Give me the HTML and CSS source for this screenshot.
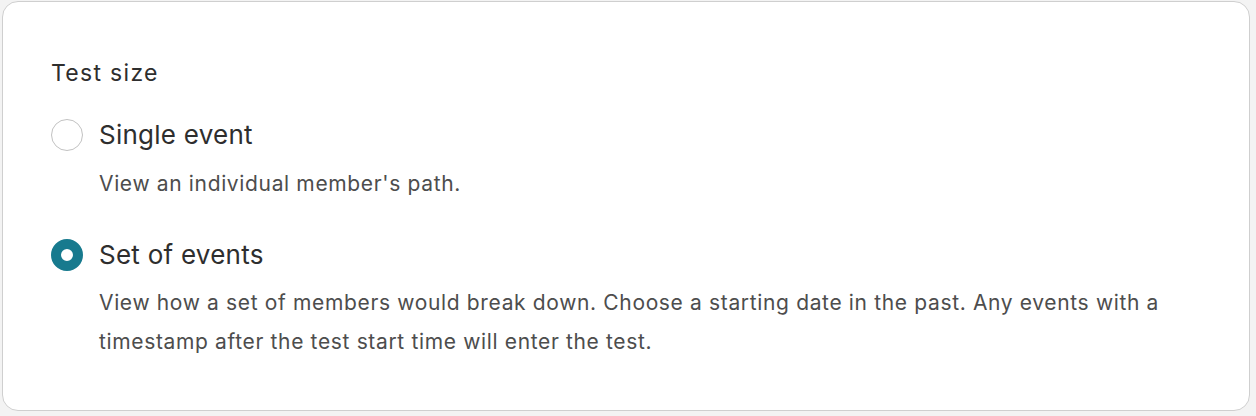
FILE: index.html
```html
<!DOCTYPE html>
<html lang="en">
<head>
<meta charset="utf-8">
<title>Test size</title>
<link rel="stylesheet" href="styles.css">
</head>
<body>
<div class="card">
  <div class="title">Test size</div>
  <div class="options">
    <div class="option">
      <span class="radio"></span>
      <div class="text">
        <div class="label">Single event</div>
        <div class="desc">View an individual member's path.</div>
      </div>
    </div>
    <div class="option">
      <span class="radio checked"></span>
      <div class="text">
        <div class="label">Set of events</div>
        <div class="desc">View how a set of members would break down. Choose a starting date in the past. Any events with a timestamp after the test start time will enter the test.</div>
      </div>
    </div>
  </div>
</div>
</body>
</html>
```
FILE: styles.css
```css
html, body { margin: 0; padding: 0; }
body {
  background: #f3f3f3;
  font-family: Inter, "Noto Sans", sans-serif;
  width: 1256px;
  height: 416px;
  padding: 1px 6px 0 2px;
  box-sizing: border-box;
}
.card {
  background: #fff;
  border: 1px solid #cfcfcf;
  border-radius: 16px;
  height: 410px;
  box-sizing: border-box;
  padding: 57px 48px 0 48px;
}
.title {
  font-size: 23px;
  letter-spacing: 1.3px;
  color: #2e2e2e;
  line-height: 28px;
}
.options {
  display: flex;
  flex-direction: column;
  gap: 36px;
  margin-top: 32px;
}
.option {
  display: flex;
  gap: 16px;
  align-items: flex-start;
}
.radio {
  flex: none;
  width: 32px;
  height: 32px;
  border-radius: 50%;
  border: 1.5px solid #c2c2c2;
  box-sizing: border-box;
}
.radio.checked {
  border: 10px solid #177a8e;
  background: #fff;
}
.label {
  font-size: 26px;
  letter-spacing: 0.25px;
  color: #2e2e2e;
  line-height: 32px;
}
.desc {
  font-size: 21px;
  letter-spacing: 0.65px;
  color: #4d4d4d;
  line-height: 39px;
  margin-top: 13px;
  max-width: 1080px;
}
.option + .option .desc {
  margin-top: 12px;
}
```
